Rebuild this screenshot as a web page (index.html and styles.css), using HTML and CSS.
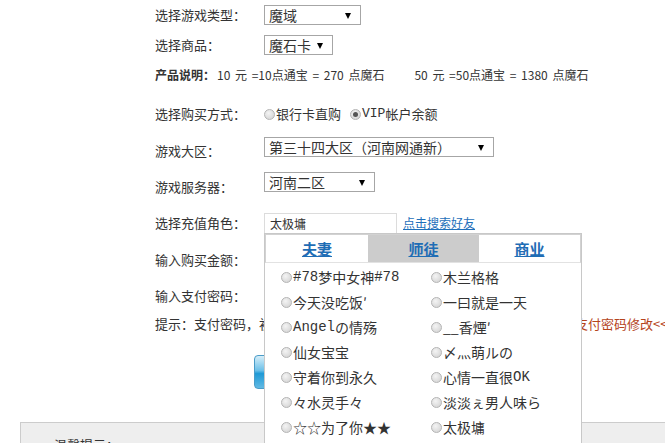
FILE: index.html
```html
<!DOCTYPE html>
<html lang="zh-CN">
  <head>
    <meta charset="UTF-8" />
    <title>魔石卡购买</title>
    <link rel="stylesheet" href="styles.css">
  </head>
  <body>
    <div class="form">
      <div class="row row-game">
        <span class="label">选择游戏类型：</span>
        <div class="select w-game"><select><option>魔域</option></select></div>
      </div>
      <div class="row row-card">
        <span class="label">选择商品：</span>
        <div class="select w-card"><select><option>魔石卡</option></select></div>
      </div>
      <div class="row row-price">
        <b>产品说明：</b><span>10 元 =10点通宝 = 270 点魔石</span>
        <span class="price-2">50 元 =50点通宝 = 1380 点魔石</span>
      </div>
      <div class="row row-pay">
        <span class="label">选择购买方式：</span>
        <label class="opt"><i class="radio"></i>银行卡直购</label>
        <label class="opt"><i class="radio checked"></i><span class="mono">VIP</span>帐户余额</label>
      </div>
      <div class="row row-area">
        <span class="label low">游戏大区：</span>
        <div class="select w-area"><select><option>第三十四大区（河南网通新）</option></select></div>
      </div>
      <div class="row row-server">
        <span class="label low">游戏服务器：</span>
        <div class="select w-server"><select><option>河南二区</option></select></div>
      </div>
      <div class="row row-role">
        <span class="label">选择充值角色：</span>
        <div class="role">
          <input class="role-input" type="text" value="太极墉" />
          <div class="friends">
            <div class="tabs">
              <a class="tab t1" href="#">夫妻</a>
              <a class="tab t2 active" href="#">师徒</a>
              <a class="tab t3" href="#">商业</a>
            </div>
            <ul class="friend-list">
              <li><i class="radio"></i><span class="mono">#78</span>梦中女神<span class="mono">#78</span></li>
              <li><i class="radio"></i>木兰格格</li>
              <li><i class="radio"></i>今天没吃饭′</li>
              <li><i class="radio"></i>一曰就是一天</li>
              <li><i class="radio"></i><span class="mono">Angel</span>の情殇</li>
              <li><i class="radio"></i>__香煙′</li>
              <li><i class="radio"></i>仙女宝宝</li>
              <li><i class="radio"></i>〆灬萌ルの</li>
              <li><i class="radio"></i>守着你到永久</li>
              <li><i class="radio"></i>心情一直很<span class="mono">OK</span></li>
              <li><i class="radio"></i>々水灵手々</li>
              <li><i class="radio"></i>淡淡ぇ男人味ら</li>
              <li><i class="radio"></i>☆☆为了你★★</li>
              <li><i class="radio"></i>太极墉</li>
              <li><i class="radio"></i>小小鱼儿</li>
              <li><i class="radio"></i>风之子</li>
            </ul>
          </div>
        </div>
        <a class="search-link" href="#">点击搜索好友</a>
      </div>
      <div class="row row-amount">
        <span class="label">输入购买金额：</span>
      </div>
      <div class="row row-pwd">
        <span class="label">输入支付密码：</span>
      </div>
      <div class="row row-tip">
        提示：支付密码，初始密码与登录密码相同，为了您的帐号安全，请及时<a class="tip-link" href="#">支付密码修改&lt;&lt;</a>
      </div>
      <div class="row row-btn">
        <button class="submit">确认购买</button>
      </div>
    </div>
    <div class="notice">
      <p>温馨提示：</p>
    </div>
  </body>
</html>
```
FILE: styles.css
```css
body {
  margin: 0;
  font-family: "Noto Sans CJK SC", "Noto Sans", sans-serif;
  color: #333;
  background: #fff;
  line-height: 1.2;
}
.form {
  padding-left: 155px;
}
.row {
  display: flex;
  align-items: center;
  white-space: nowrap;
}
.label {
  width: 109px;
  flex-shrink: 0;
  font-size: 13px;
}
.label.low {
  padding-top: 9px;
}
.mono {
  font-family: "Liberation Mono", monospace;
}
.row-game,
.row-card,
.row-price {
  height: 30px;
}
.row-pay {
  margin-top: 9px;
  height: 30px;
}
.row-area {
  height: 35px;
}
.row-server {
  height: 36px;
}
.row-role {
  margin-top: 5px;
  height: 36px;
}
.row-amount {
  height: 37px;
}
.row-pwd {
  height: 36px;
}
.row-tip {
  height: 20px;
  font-size: 13px;
}
.row-btn {
  margin-top: 21px;
  padding-left: 99px;
}

/* selects */
.select {
  position: relative;
  height: 20px;
}
.select select {
  appearance: none;
  width: 100%;
  height: 20px;
  border: 1px solid #a6a6a6;
  background: #fff;
  font-family: inherit;
  font-size: 14px;
  color: #333;
  padding: 0 0 0 4px;
  line-height: 18px;
}
.select::after {
  content: "";
  position: absolute;
  right: 10px;
  top: 8px;
  border-left: 3px solid transparent;
  border-right: 3px solid transparent;
  border-top: 6px solid #000;
}
.w-game {
  width: 97px;
}
.w-card {
  width: 69px;
}
.w-area {
  width: 230px;
}
.w-server {
  width: 111px;
}

/* price line */
.row-price {
  font-size: 12px;
  word-spacing: 2px;
}
.row-price b {
  font-weight: bold;
  margin-right: 2px;
}
.price-2 {
  margin-left: 30px;
}

/* radios */
.opt {
  display: flex;
  align-items: center;
  font-size: 13px;
  margin-right: 9px;
}
.radio {
  display: inline-block;
  box-sizing: border-box;
  width: 11px;
  height: 11px;
  border: 1px solid #b4b4b4;
  border-radius: 50%;
  background: radial-gradient(circle at 40% 35%, #f4f4f4, #cfcfcf);
  margin-right: 1px;
  position: relative;
  flex-shrink: 0;
}
.radio.checked::after {
  content: "";
  position: absolute;
  left: 2px;
  top: 2px;
  width: 5px;
  height: 5px;
  border-radius: 50%;
  background: #555;
}

/* role picker */
.role {
  position: relative;
  width: 133px;
}
.role-input {
  box-sizing: border-box;
  width: 133px;
  height: 20px;
  border: 1px solid #dcdcdc;
  border-bottom: none;
  padding: 0 5px;
  font-family: inherit;
  font-size: 12px;
  color: #333;
}
.search-link {
  margin-left: 6px;
  font-size: 12px;
  color: #1e6fba;
}
.friends {
  position: absolute;
  left: 0;
  top: 20px;
  z-index: 2;
  width: 318px;
  box-sizing: border-box;
  background: #fff;
  border: 1px solid #c8c8c8;
}
.tabs {
  display: flex;
  height: 27px;
  border: 1px solid #d2d2d2;
  border-bottom-color: #e2e2e2;
}
.tab {
  display: flex;
  align-items: center;
  justify-content: center;
  font-size: 15px;
  font-weight: bold;
  color: #1f6db5;
}
.t1 {
  width: 102px;
}
.t2 {
  width: 111px;
}
.t3 {
  flex: 1;
}
.tab.active {
  background: #cccccc;
}
.friend-list {
  list-style: none;
  margin: 0;
  padding: 2px 0 0 16px;
  display: grid;
  grid-template-columns: 150px 150px;
}
.friend-list li {
  display: flex;
  align-items: center;
  height: 25px;
  font-size: 14px;
}

/* tip and button */
.tip-link {
  margin-left: 4px;
  color: #b5441b;
  text-decoration: none;
}
.submit {
  width: 130px;
  height: 34px;
  border: 1px solid #4a9cc8;
  border-radius: 4px;
  background: linear-gradient(#d6eef9, #6cc0e8 45%, #1f9ad6 55%, #61b9e3);
  color: #fff;
  font-size: 14px;
  font-family: inherit;
}
.notice {
  margin: 33px 0 0 20px;
  height: 60px;
  background: #eeeeee;
  border: 1px solid #cccccc;
  border-right: none;
}
.notice p {
  margin: 14px 0 0 33px;
  font-size: 13px;
}
```
